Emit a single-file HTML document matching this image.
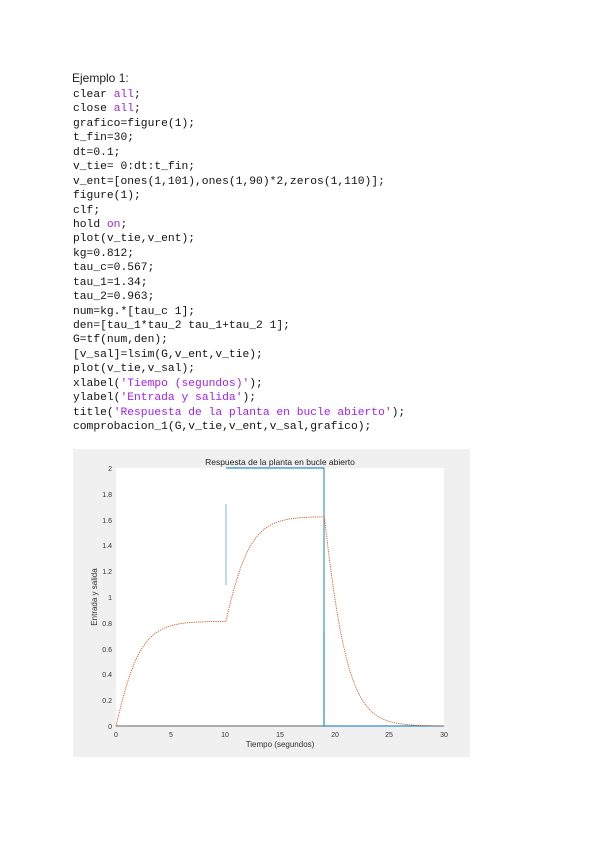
<!DOCTYPE html>
<html><head><meta charset="utf-8"><style>
body{margin:0;background:#fff;width:600px;height:848px;position:relative;overflow:hidden}
.h{position:absolute;left:72px;top:71px;font:12px "Liberation Sans",sans-serif;color:#222}
pre{position:absolute;left:73px;top:88px;margin:0;font:11.3px/14.43px "Liberation Mono",monospace;color:#111}
.k{color:#a020f0}.s{color:#a020f0}
</style></head><body>
<div class="h">Ejemplo 1:</div>
<pre>clear <span class="k">all</span>;
close <span class="k">all</span>;
grafico=figure(1);
t_fin=30;
dt=0.1;
v_tie= 0:dt:t_fin;
v_ent=[ones(1,101),ones(1,90)*2,zeros(1,110)];
figure(1);
clf;
hold <span class="k">on</span>;
plot(v_tie,v_ent);
kg=0.812;
tau_c=0.567;
tau_1=1.34;
tau_2=0.963;
num=kg.*[tau_c 1];
den=[tau_1*tau_2 tau_1+tau_2 1];
G=tf(num,den);
[v_sal]=lsim(G,v_ent,v_tie);
plot(v_tie,v_sal);
xlabel(<span class="s">'Tiempo (segundos)'</span>);
ylabel(<span class="s">'Entrada y salida'</span>);
title(<span class="s">'Respuesta de la planta en bucle abierto'</span>);
comprobacion_1(G,v_tie,v_ent,v_sal,grafico);</pre>
<svg style="position:absolute;left:0;top:0" width="600" height="848" font-family="Liberation Sans,sans-serif">
<rect x="73" y="449" width="397" height="308" fill="#f0f0f0"/>
<rect x="116" y="468" width="328" height="258" fill="#fff"/>
<text x="280" y="465" font-size="8.5" text-anchor="middle" fill="#222">Respuesta de la planta en bucle abierto</text>
<g font-size="7" fill="#333" text-anchor="end">
<text x="112" y="729">0</text><text x="112" y="703">0.2</text><text x="112" y="677">0.4</text><text x="112" y="652">0.6</text><text x="112" y="626">0.8</text><text x="112" y="600">1</text><text x="112" y="574">1.2</text><text x="112" y="548">1.4</text><text x="112" y="523">1.6</text><text x="112" y="497">1.8</text><text x="112" y="471">2</text>
</g>
<g font-size="7" fill="#333" text-anchor="middle">
<text x="116" y="737">0</text><text x="171" y="737">5</text><text x="225" y="737">10</text><text x="280" y="737">15</text><text x="335" y="737">20</text><text x="389" y="737">25</text><text x="444" y="737">30</text>
</g>
<text x="280" y="747" font-size="8" text-anchor="middle" fill="#333">Tiempo (segundos)</text>
<text transform="translate(97,597) rotate(-90)" font-size="8" text-anchor="middle" fill="#333">Entrada y salida</text>
<line x1="116" y1="726" x2="444" y2="726" stroke="#333" stroke-width="0.8"/>
<polyline points="226,468 324,468 324,726 444,726" fill="none" stroke="#0072bd" stroke-width="0.9"/>
<line x1="226" y1="504" x2="226" y2="585" stroke="#7fb3dc" stroke-width="1"/>
<line x1="324" y1="632" x2="324" y2="726" stroke="#0072bd" stroke-width="1"/>
<polyline id="out" fill="none" stroke="#d95319" stroke-width="0.9" stroke-dasharray="1.2 1"/>
</svg>
<script>
(function(){var kg=.812,tc=.567,t1=1.34,t2=.963,a=t1*t2,b=t1+t2;
var x1=0,x2=0,h=0.001,pts=[];
function u(t){return t<10.05?1:(t<19.05?2:0);}
for(var i=0;i<=30000;i++){var t=i*h;var y=kg*(x1+tc*x2);
if(i%50==0)pts.push((116+t*328/30).toFixed(1)+','+(726-y*129).toFixed(1));
var d2=(u(t)-x1-b*x2)/a;x1+=h*x2;x2+=h*d2;}
document.getElementById('out').setAttribute('points',pts.join(' '));})();
</script>
</body></html>
